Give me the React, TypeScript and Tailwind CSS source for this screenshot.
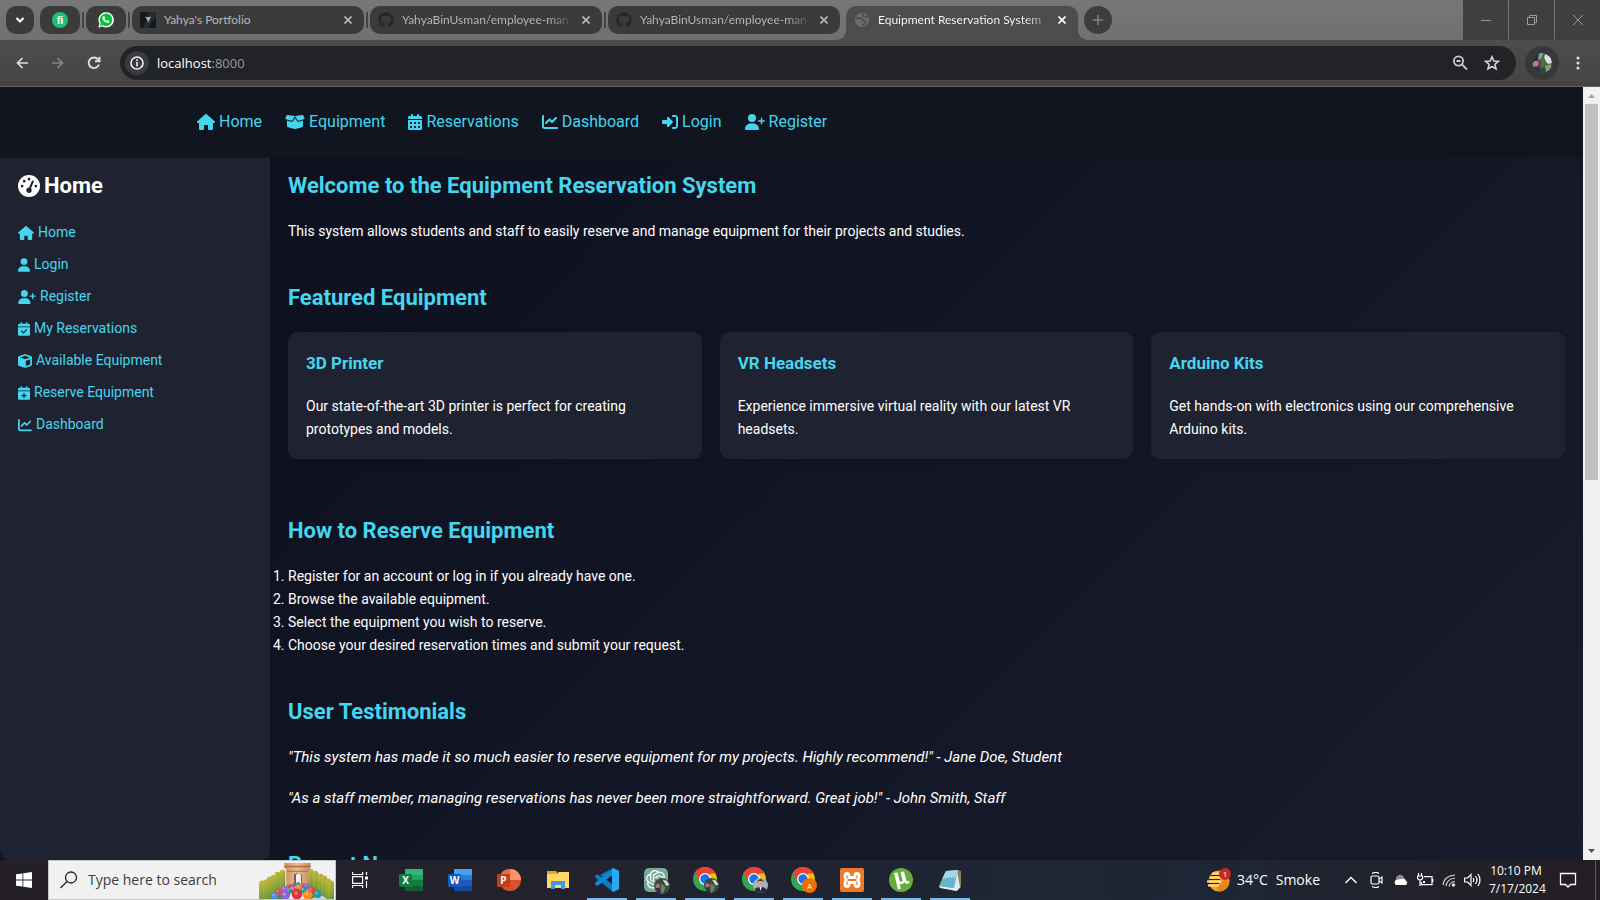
import type { ReactNode } from "react";
import type { IconType } from "react-icons";
import {
  FaBoxOpen,
  FaCalendarCheck,
  FaCalendarDays,
  FaCalendarPlus,
  FaChartLine,
  FaCube,
  FaGaugeHigh,
  FaGithub,
  FaHouse,
  FaRightToBracket,
  FaUser,
  FaUserPlus,
} from "react-icons/fa6";
import { SiOpenai } from "react-icons/si";

type LinkItem = { label: string; icon: IconType; size: string };

const navLinks: LinkItem[] = [
  { label: "Home", icon: FaHouse, size: "h-4 w-[18px]" },
  { label: "Equipment", icon: FaBoxOpen, size: "h-4 w-5" },
  { label: "Reservations", icon: FaCalendarDays, size: "h-4 w-3.5" },
  { label: "Dashboard", icon: FaChartLine, size: "h-4 w-4" },
  { label: "Login", icon: FaRightToBracket, size: "h-4 w-4" },
  { label: "Register", icon: FaUserPlus, size: "h-4 w-5" },
];

const sideLinks: LinkItem[] = [
  { label: "Home", icon: FaHouse, size: "h-3.5 w-4" },
  { label: "Login", icon: FaUser, size: "h-3.5 w-3" },
  { label: "Register", icon: FaUserPlus, size: "h-3.5 w-[18px]" },
  { label: "My Reservations", icon: FaCalendarCheck, size: "h-3.5 w-3" },
  { label: "Available Equipment", icon: FaCube, size: "h-3.5 w-3.5" },
  { label: "Reserve Equipment", icon: FaCalendarPlus, size: "h-3.5 w-3" },
  { label: "Dashboard", icon: FaChartLine, size: "h-3.5 w-3.5" },
];

const featured = [
  { title: "3D Printer", text: "Our state-of-the-art 3D printer is perfect for creating prototypes and models." },
  { title: "VR Headsets", text: "Experience immersive virtual reality with our latest VR headsets." },
  { title: "Arduino Kits", text: "Get hands-on with electronics using our comprehensive Arduino kits." },
];

const steps = [
  "Register for an account or log in if you already have one.",
  "Browse the available equipment.",
  "Select the equipment you wish to reserve.",
  "Choose your desired reservation times and submit your request.",
];

const quotes = [
  '"This system has made it so much easier to reserve equipment for my projects. Highly recommend!" - Jane Doe, Student',
  '"As a staff member, managing reservations has never been more straightforward. Great job!" - John Smith, Staff',
];

/* ---------- Browser chrome ---------- */

function CloseGlyph() {
  return (
    <svg viewBox="0 0 8 8" className="size-2" stroke="currentColor" strokeWidth="1.6">
      <path d="M.5.5l7 7M7.5.5l-7 7" />
    </svg>
  );
}

function TabDivider() {
  return <span className="mt-1.5 h-4 w-0.5 bg-[#444]" />;
}

function PinnedTab({ label, children }: { label: string; children: ReactNode }) {
  return (
    <button aria-label={label} className="flex h-7 w-10 shrink-0 items-center justify-center rounded-[10px] bg-[#3b3b3b]">
      {children}
    </button>
  );
}

function Tab({ title, icon, fade }: { title: string; icon: ReactNode; fade?: boolean }) {
  return (
    <div className="flex h-7 w-58 items-center rounded-[10px] bg-[#3b3b3b] px-2 text-[#b9b9b9]">
      {icon}
      <span
        className={
          fade
            ? "ml-2 whitespace-nowrap bg-linear-to-r from-[#b9b9b9] from-88% to-[#555] bg-clip-text text-transparent"
            : "ml-2 whitespace-nowrap"
        }
      >
        {title}
      </span>
      <button aria-label={`Close ${title}`} className="ml-auto flex size-4 items-center justify-center">
        <CloseGlyph />
      </button>
    </div>
  );
}

function ActiveTab() {
  return (
    <div className="relative mx-1 flex h-[34px] w-58 rounded-t-[10px] bg-[#4d4d4d] px-2 pb-1.5 text-white">
      <span className="absolute bottom-0 -left-2.5 size-2.5 bg-[radial-gradient(circle_at_0_0,transparent_10px,#4d4d4d_10px)]" />
      <span className="absolute -right-2.5 bottom-0 size-2.5 bg-[radial-gradient(circle_at_100%_0,transparent_10px,#4d4d4d_10px)]" />
      <div className="flex flex-1 items-center">
        <svg viewBox="0 0 16 16" className="size-4">
          <circle cx="8" cy="8" r="7" fill="#686c72" />
          <path d="M2 5.500C4 7 6.500 5.500 8 6.500s.5 2.500 2 2.500 2 .8 1.500 2-2 1-3 2.500M9.500 1.500C8.500 3 9 4.500 11 4.500s2 .5 3 1" fill="none" stroke="#4d4d4d" strokeWidth="1.700" />
        </svg>
        <span className="ml-2 whitespace-nowrap bg-linear-to-r from-white from-90% to-[#999] bg-clip-text text-transparent">
          Equipment Reservation System
        </span>
        <button aria-label="Close Equipment Reservation System" className="ml-auto flex size-4 items-center justify-center">
          <CloseGlyph />
        </button>
      </div>
    </div>
  );
}

function TabStrip() {
  const github = <FaGithub className="size-4 shrink-0 text-[#24292f]" />;
  return (
    <div className="flex h-10 items-start bg-linear-to-b from-[#777] to-[#707070] text-[12px]/4">
      <div className="flex min-w-0 flex-1 gap-0.5 pt-1.5 pl-1.5 font-['Lato','Open_Sans',sans-serif]">
        <button aria-label="Search tabs" className="mr-1 flex h-7 w-7 items-center justify-center rounded-[10px] bg-[#3b3b3b]">
          <svg viewBox="0 0 8 6" className="h-1.5 w-2" fill="none" stroke="#fff" strokeWidth="2">
            <path d="M.5 1L4 4.500 7.500 1" />
          </svg>
        </button>
        <PinnedTab label="Fiverr">
          <span className="flex size-4 items-center justify-center rounded-full bg-[#1dbf73] font-['Liberation_Sans'] text-[11px]/4 font-bold text-white">fi</span>
        </PinnedTab>
        <TabDivider />
        <PinnedTab label="WhatsApp">
          <svg viewBox="0 0 16 16" className="size-4">
            <path d="M.3 15.700l1.100-4.100A7.700 7.700 0 1 1 4.400 14.600z" fill="#fff" />
            <path d="M1.900 14.100l.8-2.900a6.300 6.300 0 1 1 2.200 2.100z" fill="#0dc143" />
            <path d="M5.600 4.300c.4-.2.8 0 .9.300l.5 1.200c.1.300-.2.700-.5 1 .5 1 1.300 1.700 2.400 2.200.4-.5.700-.9 1-.8l1.400.7c.3.200.1 1-.2 1.400-.6.700-1.600.7-2.600.3-1.900-.7-3.200-2-4-3.700-.4-1-.1-2 1.100-2.600z" fill="#fff" />
          </svg>
        </PinnedTab>
        <TabDivider />
        <Tab
          title="Yahya's Portfolio"
          icon={
            <svg viewBox="0 0 16 16" className="size-4 shrink-0">
              <rect width="16" height="16" fill="#14181c" />
              <path d="M9 0h7v5L8 16H3z" fill="#252b30" />
              <path d="M5 4.500l3 1 3-1-1.500 3L8 11 7.500 8z" fill="#b9bcc0" />
            </svg>
          }
        />
        <TabDivider />
        <Tab title="YahyaBinUsman/employee-man" icon={github} fade />
        <TabDivider />
        <Tab title="YahyaBinUsman/employee-man" icon={github} fade />
        <ActiveTab />
        <button aria-label="New tab" className="flex size-7 items-center justify-center rounded-full bg-[#3d3d3d]">
          <svg viewBox="0 0 10 10" className="size-2.5" stroke="#858585" strokeWidth="1.500">
            <path d="M5 0v10M0 5h10" />
          </svg>
        </button>
      </div>
      <div className="flex gap-px text-[#9a9a9a]">
        <button aria-label="Minimize" className="flex h-10 w-[45px] items-center justify-center bg-[#3f3f3f]">
          <svg viewBox="0 0 10 10" className="size-2.5" stroke="currentColor"><path d="M0 5.500h10" /></svg>
        </button>
        <button aria-label="Restore" className="flex h-10 w-[45px] items-center justify-center bg-[#3f3f3f]">
          <svg viewBox="0 0 10 10" className="size-2.5" fill="none" stroke="currentColor"><path d="M.5 2.500h7v7h-7zM2.500 2.500v-2h7v7h-2" /></svg>
        </button>
        <button aria-label="Close window" className="flex h-10 w-[45px] items-center justify-center bg-[#3f3f3f]">
          <svg viewBox="0 0 10 10" className="size-2.5" stroke="currentColor"><path d="M0 0l10 10M10 0L0 10" /></svg>
        </button>
      </div>
    </div>
  );
}

function Avatar() {
  return (
    <svg viewBox="0 0 20 20" className="size-5 overflow-hidden rounded-full">
      <rect width="20" height="20" fill="#4a5f48" />
      <path d="M0 0h8l-2 8-6 2z" fill="#2c2f3f" />
      <path d="M7 0h4l-1 5-4 2z" fill="#8aa3a5" />
      <path d="M13 1l6 3 1 6-4 1-4-5z" fill="#d6e2e6" />
      <path d="M10 3l3 3 1 5-4 4-2-5z" fill="#4b7040" />
      <circle cx="4" cy="11" r="3" fill="#c67d88" />
      <path d="M1 14l6-1 3 7H2z" fill="#2b2f55" />
      <path d="M7 8l2 1-1 6-2-2z" fill="#7c2f3d" />
      <path d="M13 13l6-2v5l-5 4z" fill="#86a07c" />
      <path d="M9 15l4-1 1 6h-4z" fill="#36492f" />
    </svg>
  );
}

function Toolbar() {
  return (
    <div className="flex h-[47px] items-center border-b border-[#6a6260] bg-linear-to-b from-[#4d4d4d] to-[#444] pr-3.5 pl-3.5">
      <div className="flex flex-1 items-center">
        <button aria-label="Back" className="flex size-4 items-center justify-center text-[#dedede]">
          <svg viewBox="0 0 12 12" className="size-3" fill="none" stroke="currentColor" strokeWidth="1.700"><path d="M12 6H1.500M6.500 1L1.500 6l5 5" /></svg>
        </button>
        <button aria-label="Forward" className="ml-5 flex size-4 items-center justify-center text-[#878787]">
          <svg viewBox="0 0 12 12" className="size-3" fill="none" stroke="currentColor" strokeWidth="1.700"><path d="M0 6h10.500M5.500 1l5 5-5 5" /></svg>
        </button>
        <button aria-label="Reload" className="ml-5 flex size-4 items-center justify-center text-[#dedede]">
          <svg viewBox="0 0 14 14" className="size-3.5" fill="none" stroke="currentColor" strokeWidth="1.900"><path d="M12 8.500A5.300 5.300 0 1 1 11 3.300L12 4.800M12.500.8v4.500H8" /></svg>
        </button>
        <div className="ml-[18px] flex h-[34px] flex-1 items-center rounded-full bg-[#222327] px-[5px]">
          <button aria-label="View site information" className="flex size-6 items-center justify-center rounded-full bg-[#3a3b3e]">
            <svg viewBox="0 0 14 14" className="size-3.5" fill="none" stroke="#f0f0f0" strokeWidth="1.600"><circle cx="7" cy="7" r="6" /><path d="M7 6v4.500M7 3.300v1.600" /></svg>
          </button>
          <span className="ml-2 flex-1 text-[13px]/5 text-[#999]"><span className="text-white">localhost</span>:8000</span>
          <button aria-label="Zoom" className="mr-4 flex size-4 items-center justify-center text-[#c9c9c9]">
            <svg viewBox="0 0 16 16" className="size-4" fill="none" stroke="currentColor" strokeWidth="1.800"><circle cx="6.500" cy="6" r="4.600" /><path d="M10 9.500l5 5M4.500 6h4" /></svg>
          </button>
          <button aria-label="Bookmark this tab" className="mr-[11px] flex size-4 items-center justify-center text-[#d5d5d5]">
            <svg viewBox="0 0 16 16" className="size-4" fill="none" stroke="currentColor" strokeWidth="1.600"><path d="M8 1.800l1.800 4.200 4.600.4-3.500 3 1.100 4.500L8 11.500l-4 2.400 1.100-4.500-3.500-3 4.600-.4z" /></svg>
          </button>
        </div>
        <button aria-label="Profile" className="ml-[9px] flex size-[34px] items-center justify-center rounded-full bg-[#383838]">
          <Avatar />
        </button>
        <button aria-label="Browser menu" className="ml-[11px] flex w-4 items-center justify-center">
          <svg viewBox="0 0 4 14" className="h-3.5 w-1" fill="#dcdcdc"><circle cx="2" cy="2" r="1.600" /><circle cx="2" cy="7" r="1.600" /><circle cx="2" cy="12" r="1.600" /></svg>
        </button>
      </div>
    </div>
  );
}

/* ---------- Page ---------- */

function Section({ title, children }: { title: string; children: ReactNode }) {
  return (
    <section>
      <h2 className="mb-[17px] text-[22px]/[34px] font-bold text-[#45d6ef]">{title}</h2>
      {children}
    </section>
  );
}

function Page() {
  return (
    <div className="flex min-w-0 flex-1 flex-col overflow-hidden bg-linear-135 from-[#0b0e1b] to-[#191c2d] font-['Roboto',sans-serif] text-[14px]/[23px] text-white">
      <header className="flex h-[71px] shrink-0 items-center bg-[#111520] pb-0.5 pl-[197px]">
        <nav className="flex gap-[23px] text-[16px]/6 text-[#45d6ef]">
          {navLinks.map(({ label, icon: Icon, size }) => (
            <a key={label} href="#" className="flex items-center gap-1"><Icon className={size} />{label}</a>
          ))}
        </nav>
      </header>
      <div className="flex min-h-0 flex-1">
        <aside className="w-[270px] shrink-0 rounded-b-[9px] bg-[#1f2230] px-[18px] pt-[11px]">
          <h2 className="mb-[18px] flex items-center gap-1 text-[22px]/[34px] font-bold"><FaGaugeHigh />Home</h2>
          <ul className="flex flex-col gap-[9px] text-[#45d6ef]">
            {sideLinks.map(({ label, icon: Icon, size }) => (
              <li key={label}><a href="#" className="flex items-center gap-1"><Icon className={size} />{label}</a></li>
            ))}
          </ul>
        </aside>
        <main className="flex min-w-0 flex-1 flex-col gap-[38px] px-[18px] pt-[11px]">
          <Section title="Welcome to the Equipment Reservation System">
            <p>This system allows students and staff to easily reserve and manage equipment for their projects and studies.</p>
          </Section>
          <Section title="Featured Equipment">
            <div className="mb-[17px] grid grid-cols-3 gap-[18px]">
              {featured.map((item) => (
                <article key={item.title} className="rounded-[9px] bg-[#1f2230] p-[18px] shadow-[0_4px_8px_rgba(0,0,0,0.1)]">
                  <h3 className="mb-[18px] text-[17px]/[27px] font-bold text-[#45d6ef]">{item.title}</h3>
                  <p>{item.text}</p>
                </article>
              ))}
            </div>
          </Section>
          <Section title="How to Reserve Equipment">
            <ol className="list-decimal">
              {steps.map((step) => <li key={step}>{step}</li>)}
            </ol>
          </Section>
          <Section title="User Testimonials">
            <div className="flex flex-col gap-[18px] text-[15px]/[23px] italic">
              {quotes.map((quote) => <blockquote key={quote}>{quote}</blockquote>)}
            </div>
          </Section>
          <Section title="Recent News">{null}</Section>
        </main>
      </div>
    </div>
  );
}

function Scrollbar() {
  return (
    <div className="flex w-[17px] shrink-0 flex-col items-center bg-[#f1f1f1]">
      <svg viewBox="0 0 17 17" className="size-[17px] shrink-0"><path d="M5 11h7L8.500 7z" fill="#a3a3a3" /></svg>
      <div className="h-[376px] w-[13px] bg-[#c1c1c1]" />
      <svg viewBox="0 0 17 17" className="mt-auto size-[17px] shrink-0"><path d="M5 6h7l-3.500 4z" fill="#505050" /></svg>
    </div>
  );
}

/* ---------- Taskbar ---------- */

function ChromeLogo({ children }: { children: ReactNode }) {
  return (
    <svg viewBox="0 0 26 26" className="ml-0.5 size-[26px]">
      <circle cx="12" cy="12" r="12" fill="#34a353" />
      <path d="M12 12L1.600 6A12 12 0 0 1 22.400 6z" fill="#ea4335" />
      <path d="M1.600 6L8 16.500 12 6.500z" fill="#ea4335" />
      <path d="M22.400 6.500A12 12 0 0 1 12 24l5-9V6.500z" fill="#fbbc05" />
      <circle cx="12" cy="12" r="6" fill="#fff" />
      <circle cx="12" cy="12" r="4.700" fill="#1a73e8" />
      {children}
    </svg>
  );
}

function PhotoBadge() {
  return (
    <g>
      <circle cx="18.500" cy="18.500" r="7.500" fill="#394a37" />
      <circle cx="14.500" cy="18.500" r="2.200" fill="#ad7080" />
      <path d="M19 12.500l4 1 2.500 4-3 1z" fill="#c8d5d2" />
      <path d="M18 16l4 4-3 6-2-1z" fill="#69855b" />
      <path d="M12.500 21l3.500-1 2 5-3 .5z" fill="#29304f" />
    </g>
  );
}

function OfficeLogo({ letter, tones }: { letter: string; tones: [string, string, string, string] }) {
  return (
    <svg viewBox="0 0 24 24" className="size-6">
      <path d="M6 1h18v6H6z" fill={tones[0]} />
      <path d="M6 7h18v5H6z" fill={tones[1]} />
      <path d="M6 12h18v6H6z" fill={tones[2]} />
      <path d="M6 18h18v5H6z" fill={tones[3]} />
      <rect y="6" width="13" height="13" rx="1" fill={tones[2]} />
      <text x="6.500" y="16" textAnchor="middle" fontSize="10" fontWeight="700" fill="#fff" fontFamily="Open Sans, sans-serif">{letter}</text>
    </svg>
  );
}

type TaskItem = { label: string; running: boolean; icon: ReactNode };

const taskItems: TaskItem[] = [
  { label: "Excel", running: false, icon: <OfficeLogo letter="X" tones={["#2fb873", "#21a366", "#107c41", "#185c37"]} /> },
  { label: "Word", running: false, icon: <OfficeLogo letter="W" tones={["#41a5ee", "#2b7cd3", "#185abd", "#1549a0"]} /> },
  {
    label: "PowerPoint",
    running: false,
    icon: (
      <svg viewBox="0 0 24 24" className="size-6">
        <circle cx="13" cy="12" r="11" fill="#d35230" />
        <path d="M13 1a11 11 0 0 0-11 11h11z" fill="#ed6c47" />
        <path d="M13 1a11 11 0 0 1 11 11H13z" fill="#ff8f6b" />
        <rect y="6" width="13" height="13" rx="1" fill="#c43e1c" />
        <text x="6.500" y="16" textAnchor="middle" fontSize="10" fontWeight="700" fill="#fff" fontFamily="Open Sans, sans-serif">P</text>
      </svg>
    ),
  },
  {
    label: "File Explorer",
    running: false,
    icon: (
      <svg viewBox="0 0 24 24" className="size-6">
        <path d="M1 3h9l2 2h-1v3H1z" fill="#e8a317" />
        <path d="M1 6h10l2-2h10v16H1z" fill="#ffd768" />
        <path d="M5 21v-8h14v8h-4v-4H9v4z" fill="#3f9bdc" />
      </svg>
    ),
  },
  {
    label: "Visual Studio Code",
    running: true,
    icon: (
      <svg viewBox="0 0 24 24" className="size-6">
        <path d="M18 0L7 9.800 2.500 6.300 0 7.500v1.700L18 24l1-6.500L5 7z" fill="#0a7bc4" />
        <path d="M18 0l.2 6.500L2.500 18 0 16.500v-1.700z" fill="#0f86d2" />
        <path d="M18 0l6 2.700v18.600L18 24l-1-1.300V1.300z" fill="#29a9f2" />
      </svg>
    ),
  },
  {
    label: "ChatGPT",
    running: true,
    icon: (
      <span className="relative flex size-6 items-center justify-center rounded-[5px] bg-[#75a99c] text-white">
        <SiOpenai className="size-5" />
        <svg viewBox="11 11 15 15" className="absolute -right-0.5 -bottom-0.5 size-4"><PhotoBadge /></svg>
      </span>
    ),
  },
  { label: "Chrome", running: true, icon: <ChromeLogo><PhotoBadge /></ChromeLogo> },
  {
    label: "Chrome, second profile",
    running: true,
    icon: (
      <ChromeLogo>
        <circle cx="18.500" cy="18.500" r="7.500" fill="#a7b3bd" />
        <path d="M12.500 23c1-4 11-4 12 0a7.500 7.500 0 0 1-12 0z" fill="#222a44" />
        <circle cx="18.500" cy="16" r="3" fill="#d3a58c" />
        <path d="M15.300 15.500c0-4.500 6.400-4.500 6.400 0l-1.200-1.700h-4z" fill="#1d1a1e" />
        <path d="M17.500 20h2l-1 4z" fill="#fff" />
      </ChromeLogo>
    ),
  },
  {
    label: "Chrome, third profile",
    running: true,
    icon: (
      <ChromeLogo>
        <circle cx="18.500" cy="18.500" r="7.500" fill="#ef6c00" />
        <text x="18.500" y="21.500" textAnchor="middle" fontSize="8" fill="#fff" fontFamily="Roboto, sans-serif">A</text>
      </ChromeLogo>
    ),
  },
  {
    label: "XAMPP",
    running: true,
    icon: (
      <span className="flex size-6 items-center justify-center rounded-xs bg-[#ee7a28]">
        <svg viewBox="0 0 24 24" className="size-6" fill="none" stroke="#fff" strokeWidth="2.800" strokeLinejoin="round">
          <path d="M9 9.500V7.500a2 2 0 0 0-4 0v1.500q0 2 1.500 3Q5 13 5 15v1.500a2 2 0 0 0 4 0v-2h6v2a2 2 0 0 0 4 0V15q0-2-1.500-3Q19 11 19 9V7.500a2 2 0 0 0-4 0v2z" />
        </svg>
      </span>
    ),
  },
  {
    label: "uTorrent",
    running: true,
    icon: (
      <svg viewBox="0 0 24 24" className="size-6">
        <circle cx="12" cy="12" r="12" fill="#65ae3c" />
        <path d="M5 5l3.500-.5 2 8c.5 2 3.500 1.500 3-.5l-2-8 3.500-.5 2.200 8.500c.3 1.200 1.300 1.500 2.800 1l.5 2c-2 1-4 1-5-.8-1.300 2-4 2.500-5 1.500l1.400 5-2.900.8z" fill="#fff" />
      </svg>
    ),
  },
  {
    label: "Notepad",
    running: true,
    icon: (
      <svg viewBox="0 0 24 24" className="size-6">
        <path d="M19 2l4 1v16l-3 3z" fill="#8d7a5c" />
        <path d="M19 2l3 17-3 4-5-1z" fill="#dfeaf0" />
        <path d="M8 3l12-1-4 18-15-2z" fill="#67b5c9" />
        <path d="M8 3l12-1-2 8C12 9 8 10 4 11z" fill="#a5d8e2" />
        <path d="M1 18l15 2 3 3-17-3z" fill="#e8eef1" />
      </svg>
    ),
  },
];

const trees: [number, number][] = [
  [0, 20], [4, 19], [8, 16], [12, 14], [16, 11], [21, 9], [50, 8], [55, 10], [60, 13], [64, 15], [68, 18], [71, 20],
];

const balls: [number, number, number, string][] = [
  [31, 26, 2.5, "#e0474c"], [35, 25, 2.5, "#8e63ce"], [40, 24, 2.5, "#1f9d9d"], [45, 25, 2.5, "#e0474c"], [49, 26, 3, "#8e63ce"],
  [41, 27, 3, "#ff8b1f"], [26, 29, 3.5, "#9a6ad6"], [31, 31, 3, "#1f9d9d"], [36, 30, 3, "#e0474c"], [46, 30, 3.5, "#1f9d9d"],
  [54, 30, 3.5, "#e0474c"], [20, 32, 3.5, "#e0474c"], [16, 36, 4, "#3f8fe0"], [27, 35, 5, "#8e63ce"], [39, 34, 5.5, "#d9363b"],
  [50, 35, 5, "#ff8b1f"], [60, 34, 4, "#1f9d9d"],
];

function SearchArt() {
  return (
    <svg viewBox="0 0 77 39" className="h-[38px] w-[77px]">
      <defs>
        <linearGradient id="tree" x1="0" y1="0" x2=".3" y2="1">
          <stop offset="0" stopColor="#d3bd3e" />
          <stop offset=".45" stopColor="#8fa83a" />
          <stop offset="1" stopColor="#3d7a2a" />
        </linearGradient>
        <linearGradient id="stone" x1="0" y1="0" x2="1" y2="0">
          <stop offset="0" stopColor="#c98f61" />
          <stop offset=".5" stopColor="#edbd8e" />
          <stop offset="1" stopColor="#c48a5c" />
        </linearGradient>
      </defs>
      {trees.map(([x, y]) => <rect key={x} x={x} y={y} width="6" height="34" rx="3" fill="url(#tree)" />)}
      <path d="M26 2h27v5l-2 2v18H28V9l-2-2z" fill="url(#stone)" />
      <path d="M26 5h27v1.500H26zM28 10h23v1H28z" fill="#a8714a" />
      <path d="M36 26V14q4-4 8 0v12z" fill="#8d5a3b" />
      <path d="M38 26V14q3-3 5 0v12z" fill="#f4f4f8" />
      <path d="M54 39q8-7 16 0z" fill="#cfcdec" />
      {balls.map(([x, y, r, fill]) => (
        <g key={`${x}-${y}`}>
          <circle cx={x} cy={y} r={r} fill={fill} />
          <circle cx={x - 1} cy={y - 1} r={r / 3} fill="#fff" fillOpacity=".35" />
        </g>
      ))}
    </svg>
  );
}

function Taskbar() {
  return (
    <footer className="flex h-10 shrink-0 items-center bg-linear-to-r from-[#251f27] via-[#1d2636] via-75% to-[#241e23] text-[14px]/5 text-white">
      <button aria-label="Start" className="flex h-10 w-12 items-center justify-center">
        <svg viewBox="0 0 16 16" className="size-4" fill="#fff"><path d="M0 2.300l6.500-.9v6.200H0zM7.300 1.300L16 0v7.600H7.300zM0 8.400h6.500v6.200L0 13.700zM7.300 8.400H16V16l-8.700-1.300z" /></svg>
      </button>
      <div className="flex h-10 w-72 items-center border border-[#c6c6c6] bg-[#f1f1f1] text-[#333]">
        <svg viewBox="0 0 18 18" className="ml-[11px] size-[18px]" fill="none" stroke="#222" strokeWidth="1.300"><circle cx="11" cy="6.500" r="5.500" /><path d="M7 10.500L.5 17" /></svg>
        <input type="text" aria-label="Search" placeholder="Type here to search" className="ml-2.5 min-w-0 flex-1 bg-transparent text-[14px]/5 outline-none placeholder:text-[#3b3b3b]" />
        <SearchArt />
      </div>
      <button aria-label="Task View" className="flex h-10 w-12 items-center justify-center">
        <svg viewBox="0 0 16 16" className="size-4" fill="none" stroke="#fff" strokeWidth="1.200"><path d="M.6 0v2.500h10V0M.6 16v-2.500h10V16M.6 4.600h10v6.700H.6zM14.500 0v3M14.500 9v7" /><path d="M13 4.500h3v3h-3z" fill="#fff" stroke="none" /></svg>
      </button>
      <ul className="ml-0.5 flex">
        {taskItems.map(({ label, running, icon }) => (
          <li key={label} className="w-[49px]">
            <button aria-label={label} className="relative flex h-10 w-full items-center justify-center">
              {icon}
              {running && <span className="absolute bottom-0 h-0.5 w-10 bg-[#76b9ed]" />}
            </button>
          </li>
        ))}
      </ul>
      <div className="ml-auto flex items-center">
        <button className="mr-[25px] flex items-center">
          <svg viewBox="0 0 24 24" className="mr-1.5 size-6">
            <circle cx="12" cy="13" r="10.500" fill="#f5a32e" />
            <path d="M11 23.500A10.500 10.500 0 0 0 22.500 13L17 12l-6 7z" fill="#e98420" />
            <path d="M5 5.500h9M3 9.500h13M0 13.500h14M1 17.500h11" stroke="#ffe08a" strokeWidth="1.800" />
            <path d="M4 7.500h10M2 11.500h11M2 15.500h10" stroke="#262632" strokeWidth="1.200" />
            <circle cx="18" cy="6" r="6" fill="#c42b1c" />
            <text x="18" y="9" textAnchor="middle" fontSize="8" fill="#fff" fontFamily="Open Sans, sans-serif">1</text>
          </svg>
          <span className="mr-2">34°C</span>
          <span>Smoke</span>
        </button>
        <div className="flex items-center gap-2">
          <svg viewBox="0 0 12 8" className="mr-1 h-2 w-3" fill="none" stroke="#fff" strokeWidth="1.300"><path d="M.5 7L6 1.500 11.500 7" /></svg>
          <svg viewBox="0 0 16 16" className="size-4" fill="none" stroke="#fff" strokeWidth="1.200"><rect x="2" y="4" width="8" height="8" rx="1.500" /><path d="M10 7l3-2v6l-3-2M3 1.500q4-2 7 0M3 14.500q4 2 7 0" /></svg>
          <svg viewBox="0 0 16 12" className="h-3 w-4"><path d="M3 6a4 4 0 0 1 8-2l4 5H2z" fill="#8f8f8f" /><path d="M3 11a3 3 0 0 1 0-5q5-1 6-1 3-1 4 2a2.500 2.500 0 0 1 0 4z" fill="#fff" /></svg>
          <svg viewBox="0 0 17 14" className="h-3.5 w-[17px]" fill="none" stroke="#fff" strokeWidth="1.200"><path d="M7 3.600h8v8H4.500V9M15.800 6v3M1.500 0v3M4.500 0v3M.6 3h5v2.500q-2.500 3-5 0zM3 7v6" /><path d="M6 8h2v2H6z" fill="#fff" stroke="none" /></svg>
          <svg viewBox="0 0 14 14" className="size-3.5" fill="none" stroke="#d5d5d5" strokeWidth="1.200"><path d="M1 12Q2 3 13 2M4 13Q5 6 13 5M7 13.500Q8 9 13 8.500" /><circle cx="11.500" cy="12" r="1.200" fill="#fff" /></svg>
          <svg viewBox="0 0 17 14" className="h-3.5 w-[17px]" fill="none" stroke="#fff" strokeWidth="1.200"><path d="M.6 5h3L7 1.500v11L3.600 9h-3zM9 5q1.500 2 0 4M11.500 3q3 4 0 8M14 1q4 6 0 12" /></svg>
        </div>
        <div className="ml-2 w-[54px] text-center text-[12px]/[18px] whitespace-nowrap">
          <div>10:10 PM</div>
          <div>7/17/2024</div>
        </div>
        <button aria-label="Notifications" className="mr-[18px] ml-4 flex size-[18px] items-center justify-center">
          <svg viewBox="0 0 18 18" className="size-[18px]" fill="none" stroke="#fff" strokeWidth="1.300"><path d="M1.500 2.500h15v11h-5L9 16l-2.500-2.500h-5z" /></svg>
        </button>
        <span className="mr-1 h-10 w-px bg-[#5d5a5e]" />
      </div>
    </footer>
  );
}

export default function App() {
  return (
    <div className="flex h-screen flex-col overflow-hidden font-['Open_Sans','Noto_Sans',sans-serif]">
      <TabStrip />
      <Toolbar />
      <div className="flex min-h-0 flex-1">
        <Page />
        <Scrollbar />
      </div>
      <Taskbar />
    </div>
  );
}
